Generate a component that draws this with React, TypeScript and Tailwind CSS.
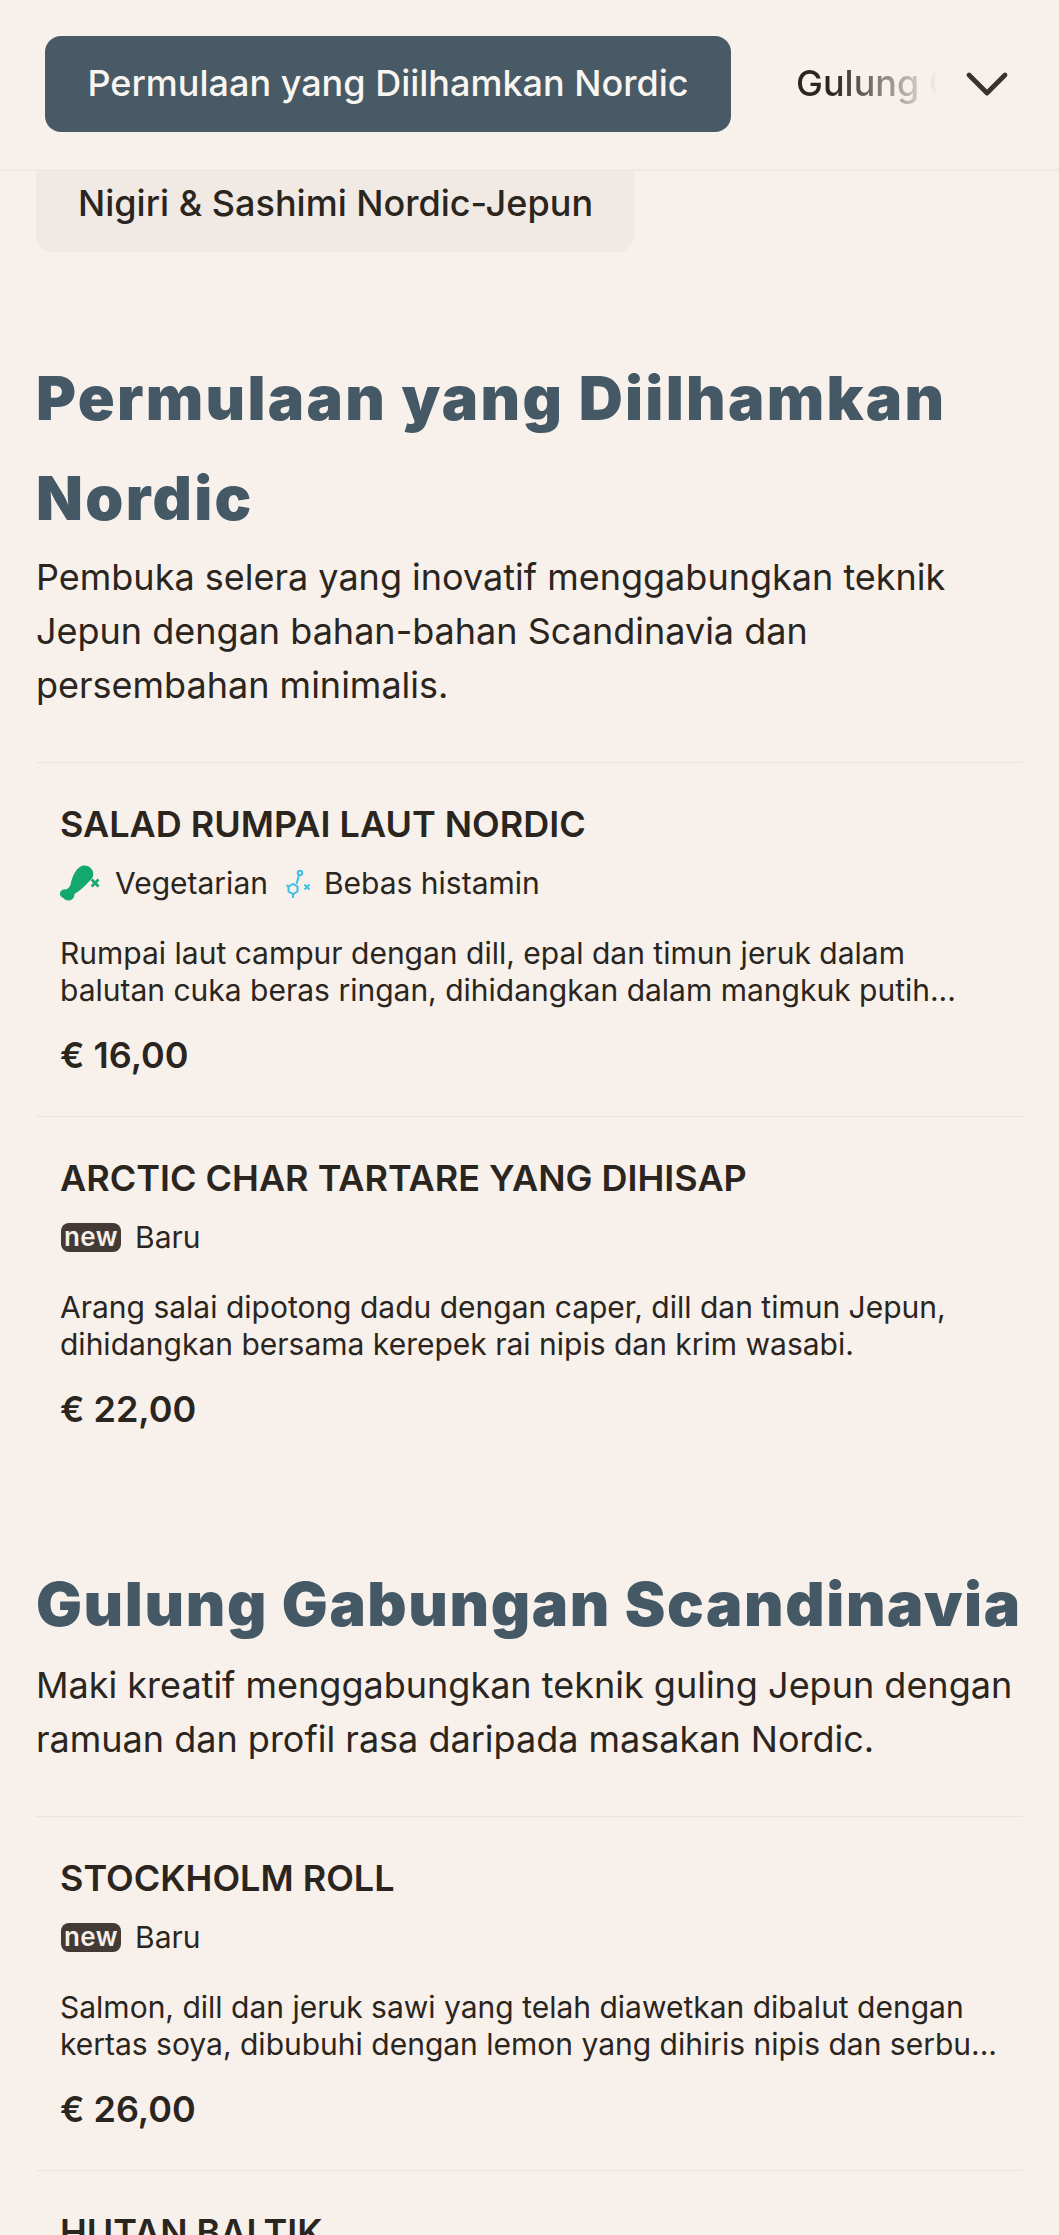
import { ChevronDown } from 'lucide-react'

type Item = {
  name: string
  tags: 'diet' | 'new'
  desc: string[]
  price: string
}

const STARTERS: Item[] = [
  {
    name: 'SALAD RUMPAI LAUT NORDIC',
    tags: 'diet',
    desc: [
      'Rumpai laut campur dengan dill, epal dan timun jeruk dalam',
      'balutan cuka beras ringan, dihidangkan dalam mangkuk putih...',
    ],
    price: '€ 16,00',
  },
  {
    name: 'ARCTIC CHAR TARTARE YANG DIHISAP',
    tags: 'new',
    desc: [
      'Arang salai dipotong dadu dengan caper, dill dan timun Jepun,',
      'dihidangkan bersama kerepek rai nipis dan krim wasabi.',
    ],
    price: '€ 22,00',
  },
]

const ROLLS: Item[] = [
  {
    name: 'STOCKHOLM ROLL',
    tags: 'new',
    desc: [
      'Salmon, dill dan jeruk sawi yang telah diawetkan dibalut dengan',
      'kertas soya, dibubuhi dengan lemon yang dihiris nipis dan serbu...',
    ],
    price: '€ 26,00',
  },
]

function DrumstickIcon() {
  return (
    <svg width="46" height="40" viewBox="0 -2 46 40" className="shrink-0 overflow-visible">
      <path d="M22 .8C27-.8 32 2.5 33 7C34 11 32 14 29.5 16C25.5 20.5 20 26 14.5 29C14.5 32.5 12.5 35.5 8.5 35.5C6 35.5 4.5 34.5 3.5 33C1.5 32.5-.5 30.5 0 28C.5 25 4 23.5 6.5 24.5C8.5 23 10 21.5 10.5 19.5C12 13 15 4 22 .8Z" fill="#13a86f" />
      <path d="M31.7 14.5L38.5 21.5M38.5 14.5L31.7 21.5" stroke="#13a86f" strokeWidth="2.6" fill="none" />
    </svg>
  )
}

function MoleculeIcon() {
  return (
    <svg width="26" height="30" viewBox="0 -2 26 30" className="shrink-0 ml-[18px] overflow-visible" fill="none" stroke="#3fbfe6" strokeWidth="2">
      <circle cx="14" cy="3" r="2.2" />
      <path d="M13 5L10.5 14" />
      <path d="M2.5 16.5L7 14L11.5 16.5V21.5L7 24L2.5 21.5Z" />
      <path d="M7 24V28M2.5 16.5L.5 15" />
      <path d="M18.5 14.5L23.5 19.5M23.5 14.5L18.5 19.5" strokeWidth="2" />
    </svg>
  )
}

function MenuItem({ item }: { item: Item }) {
  return (
    <div className="border-t border-[#ece5df] pl-[24px] pr-[16px] h-[354px]">
      <h3 className="text-[36px] leading-[44px] font-semibold text-[#2b2520] pt-[39px]">{item.name}</h3>
      {item.tags === 'diet' ? (
        <div className="flex items-center mt-[17px] h-[40px] text-[30px] text-[#2b2520]">
          <DrumstickIcon />
          <span className="ml-[9px]">Vegetarian</span>
          <MoleculeIcon />
          <span className="ml-[12px]">Bebas histamin</span>
        </div>
      ) : (
        <div className="flex items-center mt-[17px] h-[40px] text-[30px] text-[#2b2520]">
          <span className="bg-[#433a36] text-[#f5f0ea] text-[26px] leading-[28px] h-[29px] font-semibold tracking-[0.5px] rounded-[8px] w-[60px] ml-[1px] text-center">new</span>
          <span className="ml-[14px]">Baru</span>
        </div>
      )}
      <p className="text-[30px] leading-[37px] text-[#2b2520] mt-[32px] whitespace-nowrap">
        {item.desc.map(line => <span key={line} className="block">{line}</span>)}
      </p>
      <div className="text-[36px] leading-[44px] font-semibold text-[#2b2520] mt-[24px]">{item.price}</div>
    </div>
  )
}

export default function App() {
  return (
    <div className="h-[2235px] overflow-hidden bg-[#f7f0eb]" style={{ fontFamily: 'Inter, sans-serif' }}>
      <div className="h-[171px] border-b-2 border-[#f0e9e3] flex items-start pl-[45px] pt-[36px]">
        <div className="w-[686px] h-[96px] rounded-[16px] bg-[#475a65] text-[#f9f5f1] text-[36px] font-medium leading-[94px] text-center shrink-0">
          Permulaan yang Diilhamkan Nordic
        </div>
        <div className="ml-[65px] text-[36px] font-medium leading-[94px] w-[150px] overflow-hidden whitespace-nowrap text-transparent bg-clip-text bg-gradient-to-r from-[#2b2520] from-25% to-transparent to-95%">
          Gulung Gabungan
        </div>
        <ChevronDown size={72} strokeWidth={1.6} className="text-[#39322d] ml-[5px] mt-[12px] shrink-0" />
      </div>

      <div className="px-[36px]">
        <div className="w-[598px] h-[81px] rounded-b-[16px] bg-[#f0e9e4] text-[36px] font-medium leading-[64px] pl-[42px] text-[#2b2520]">
          Nigiri &amp; Sashimi Nordic-Jepun
        </div>

        <h2 className="text-[61px] leading-[100px] font-black tracking-[2.3px] text-[#445866] mt-[96px]">
          Permulaan yang Diilhamkan Nordic
        </h2>
        <p className="text-[36px] leading-[54px] text-[#2b2520] mt-[2px]">
          Pembuka selera yang inovatif menggabungkan teknik Jepun dengan bahan-bahan Scandinavia dan persembahan minimalis.
        </p>
        <div className="mt-[50px]">
          {STARTERS.map(i => <MenuItem key={i.name} item={i} />)}
        </div>

        <h2 className="text-[61px] leading-[100px] font-black tracking-[1.6px] text-[#445866] mt-[84px] whitespace-nowrap">
          Gulung Gabungan Scandinavia
        </h2>
        <p className="text-[36px] leading-[54px] text-[#2b2520] mt-[4px]">
          Maki kreatif menggabungkan teknik guling Jepun dengan ramuan dan profil rasa daripada masakan Nordic.
        </p>
        <div className="mt-[50px]">
          {ROLLS.map(i => <MenuItem key={i.name} item={i} />)}
          <div className="border-t border-[#ece5df] pl-[24px]">
            <h3 className="text-[36px] leading-[44px] font-semibold text-[#2b2520] pt-[39px]">HUTAN BALTIK</h3>
          </div>
        </div>
      </div>
    </div>
  )
}
